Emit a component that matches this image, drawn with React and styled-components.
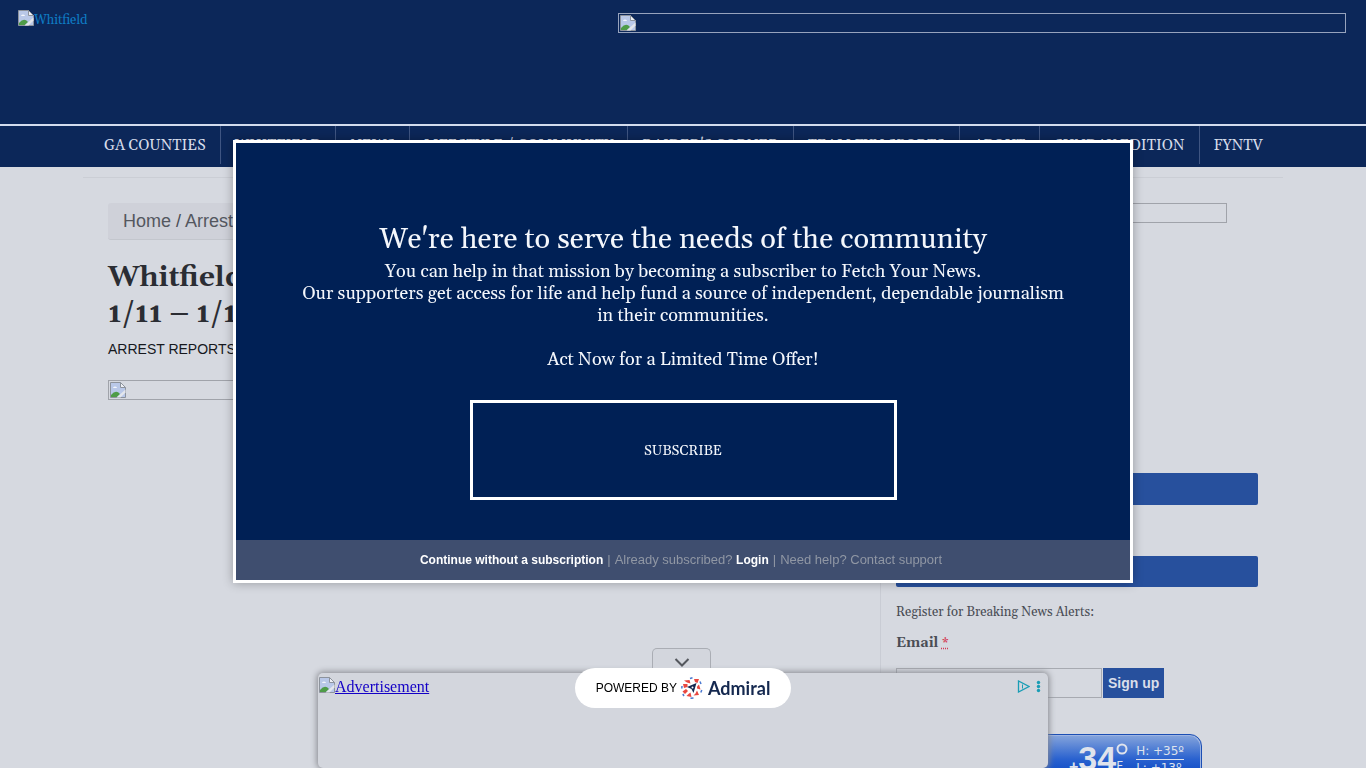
import React from "react";
import styled, { createGlobalStyle } from "styled-components";

const serif = `Georgia, Gelasio, "Liberation Serif", serif`;
const sans = `"Liberation Sans", Arial, sans-serif`;

const GlobalStyle = createGlobalStyle`
  *, *::before, *::after { box-sizing: border-box; }
  body {
    margin: 0;
    height: 100vh;
    overflow: hidden;
    background: #d6d9e0;
    color: #4a4d55;
    font: 13px/20px ${serif};
  }
  h1, h2, p, ul { margin: 0; padding: 0; }
  ul { list-style: none; }
`;

const Header = styled.header`
  display: flex;
  justify-content: space-between;
  align-items: flex-start;
  height: 124px;
  padding: 10px 20px 0 18px;
  background: #0c2759;
`;

const LogoLink = styled.a`
  display: flex;
  color: #0f7cc4;
  text-decoration: none;
`;

const ImageFrame = styled.div`
  display: flex;
  align-items: center;
  width: ${(p) => p.$width};
  height: 20px;
  margin: ${(p) => p.$margin || "0"};
  padding: 1px;
  border: 1px solid ${(p) => p.$line || "#a0a3aa"};
`;

const NavBar = styled.nav`
  height: 43px;
  border-top: 2px solid #d3dcee;
  background: #0c2759;
`;

const NavList = styled.ul`
  display: flex;
  width: 1200px;
  max-width: 100%;
  margin: 0 auto;
  padding-left: 7px;
`;

const NavItem = styled.li`
  height: 38px;
  padding: 0 14px;
  border-right: 1px solid #3f5582;
  &:last-child { border-right: 0; }
`;

const NavLink = styled.a`
  color: #d6dcea;
  font-size: 15px;
  line-height: 40px;
  text-decoration: none;
  white-space: nowrap;
`;

const Container = styled.div`
  width: 1200px;
  max-width: 100%;
  margin: 10px auto 0;
  padding: 0 25px;
  border-top: 1px solid #cbced5;
  display: flex;
`;

const Main = styled.main`
  flex: 1;
  padding: 25px 15px 0 0;
`;

const Breadcrumb = styled.div`
  height: 37px;
  padding: 0 15px;
  border-bottom: 1px solid #c3c6cd;
  border-radius: 3px;
  background: #cfd1d9;
  font: 18px/36px ${sans};
  a { color: #54575f; text-decoration: none; }
`;

const Title = styled.h1`
  margin-top: 20px;
  color: #2b2d33;
  font-size: 28px;
  line-height: 36px;
`;

const Category = styled.p`
  margin: 7px 0 21px;
  color: #16181d;
  font: 14px/20px ${sans};
`;

const Sidebar = styled.aside`
  width: 378px;
  min-height: 600px;
  padding: 25px 0 0 15px;
  border-left: 1px solid #c9ccd4;
`;

const Bar = styled.div`
  height: ${(p) => p.$height};
  margin-top: ${(p) => p.$top};
  border-radius: 2px;
  background: #27509d;
`;

const Notice = styled.p`
  margin-top: 15px;
`;

const EmailLabel = styled.label`
  display: block;
  margin: 11px 0 15px;
  font-size: 14px;
  font-weight: bold;
  abbr {
    color: #d33a55;
    font-weight: normal;
    text-decoration: underline dotted #d33a55;
  }
`;

const SignupRow = styled.div`
  display: flex;
  gap: 1px;
`;

const EmailInput = styled.input`
  width: 206px;
  height: 30px;
  border: 1px solid #a7aab1;
  background: transparent;
`;

const SignupButton = styled.button`
  height: 30px;
  padding: 0 5px;
  border: 0;
  background: #27509d;
  color: #d9deea;
  font: bold 14px/20px ${sans};
`;

const Weather = styled.div`
  display: flex;
  justify-content: flex-end;
  width: 250px;
  height: 110px;
  margin: 36px auto 0;
  padding: 8px 17px;
  border: 1px solid #1c4fb4;
  border-radius: 12px;
  box-shadow: inset -1px 1px 0 #9db4e2;
  background: linear-gradient(#86a5dc 0, #2a62cf 24px, #1450c8 36px);
  color: #dfe3ec;
`;

const Temperature = styled.div`
  display: flex;
  font: bold 34px/30px ${sans};
  small { margin-top: 9px; font-size: 16px; line-height: 30px; }
`;

const Degree = styled.div`
  display: flex;
  flex-direction: column;
  width: 12px;
  margin-right: 8px;
  font: 12px/14px "DejaVu Sans", sans-serif;
  svg { margin-bottom: 4px; }
`;

const HighLow = styled.div`
  font: 12px/16px "DejaVu Sans", sans-serif;
  p:first-child { border-bottom: 1px solid #dfe3ec; }
`;

const AdAnchor = styled.section`
  position: fixed;
  bottom: 0;
  left: 50%;
  width: 730px;
  height: 95px;
  transform: translateX(-50%);
  display: flex;
  justify-content: space-between;
  padding: 4px 6px 0 1px;
  border-radius: 5px;
  background: #d3d6dd;
  box-shadow: 0 0 6px 1px #85878d;
`;

const AdLink = styled.a`
  display: flex;
  height: 20px;
  color: #1300c6;
  font: 16px/20px "Liberation Serif", serif;
`;

const AdToggle = styled.button`
  position: absolute;
  left: 334px;
  top: -25px;
  width: 59px;
  height: 25px;
  display: grid;
  place-items: center;
  padding: 4px 0 0;
  border: 1px solid #aaadb4;
  border-bottom: 0;
  border-radius: 5px 5px 0 0;
  background: #d3d6dd;
`;

const AdChoices = styled.div`
  display: flex;
  gap: 4px;
  padding-top: 3px;
`;

const Overlay = styled.div`
  position: fixed;
  inset: 0;
  display: flex;
  flex-direction: column;
  align-items: center;
  gap: 85px;
  padding-top: 140px;
`;

const Dialog = styled.section`
  display: flex;
  flex-direction: column;
  width: 900px;
  max-width: 100%;
  border: 3px solid #fff;
  background: #002055;
  box-shadow: 0 0 10px rgba(0, 0, 0, 0.3);
  color: #f4f7fc;
  text-align: center;
`;

const DialogBody = styled.div`
  display: flex;
  flex-direction: column;
  align-items: center;
  padding: 76px 64px 40px;
`;

const DialogTitle = styled.h2`
  font-size: 29px;
  font-weight: normal;
  line-height: 42px;
`;

const DialogText = styled.p`
  font-size: 18px;
  line-height: 22px;
  & + & { margin-top: 22px; }
`;

const SubscribeButton = styled.button`
  width: 427px;
  height: 100px;
  margin-top: 29px;
  padding: 2px 0 0;
  border: 3px solid #fff;
  background: transparent;
  color: inherit;
  font: 14px/20px ${serif};
`;

const DialogFooter = styled.footer`
  display: flex;
  justify-content: center;
  align-items: center;
  height: 40px;
  padding-right: 4px;
  background: #3f4e6f;
  color: #9097a4;
  font: 13px/20px ${sans};
`;

const FooterLink = styled.a`
  color: ${(p) => (p.$strong ? "#fff" : "inherit")};
  font-weight: ${(p) => (p.$strong ? "bold" : "normal")};
  font-size: ${(p) => (p.$strong ? "12px" : "13px")};
  text-decoration: none;
`;

const Divider = styled.span`
  padding: 0 4px;
`;

const Powered = styled.a`
  display: flex;
  align-items: center;
  justify-content: center;
  width: 216px;
  height: 40px;
  border-radius: 20px;
  background: #fff;
  color: #000;
  font: 12px/20px ${sans};
  text-decoration: none;
  svg { margin: 0 5px 0 4px; }
`;

const Brand = styled.span`
  color: #14284f;
  font: bold 18px/20px Lato, sans-serif;
`;

const BrokenImage = () => (
  <svg width="16" height="16" viewBox="0 0 16 16" aria-hidden="true">
    <path d="M.5.5h10l5 5v10H.5z" fill="#b9c8e8" stroke="#8d939c" />
    <path d="M10.500.5v5h5z" fill="#eef0f5" stroke="#8d939c" />
    <path d="M3 6a2 1.500 0 0 1 4 0z" fill="#f2f5fb" />
    <path d="M1 15v-2q5-6 9-1l-3 3z" fill="#4f9c48" />
    <path d="m6.500 15.500 9-8v3l-5 5z" fill="#e3e6ec" />
  </svg>
);

const AdmiralMark = () => (
  <svg width="22" height="22" viewBox="0 0 22 22" aria-hidden="true">
    <g fill="#e8473f">
      <path d="M3 3.500 8.500 3l1 3.500-3.500-1z" />
      <path d="m13 2 5 0 -1.500 4-2.500-1z" />
      <path d="m18 7.500 1.500 5-3.500-1 0-2z" />
      <path d="m16 13.500 2 4.500-5.500.5 2-2z" />
      <path d="m9.500 15.500 1 4.500-5-1 2-2z" />
      <path d="M1.500 14.500 5 12l2 2-3 3z" />
      <path d="m2 7 4.500 0 0 3-3.500 1z" />
    </g>
    <path
      d="M9 1.500 11.500.8M19 4.500l1 2.500M20.800 13l-1 2.500M12.500 21l-3 .3M3 19l-1.200-2M.8 11.500l.2-2.500"
      fill="none"
      stroke="#4a78d0"
      strokeWidth="1.500"
    />
    <path d="m15.500 6-3 10-2-4-4.500-2z" fill="#14284f" />
    <circle cx="11.500" cy="10.500" r="1" fill="#fff" />
  </svg>
);

const navItems = [
  "GA COUNTIES",
  "WHITFIELD",
  "NEWS",
  "LIFESTYLE / COMMUNITY",
  "RAIDER'S CORNER",
  "TEAM FYN SPORTS",
  "ABOUT",
  "SUNDAY EDITION",
  "FYNTV",
];

export default function App() {
  return (
    <>
      <GlobalStyle />
      <Header>
        <LogoLink href="#home">
          <BrokenImage />
          Whitfield
        </LogoLink>
        <ImageFrame $width="728px" $margin="3px 0 0" $line="#97a3bd">
          <BrokenImage />
        </ImageFrame>
      </Header>
      <NavBar>
        <NavList>
          {navItems.map((label) => (
            <NavItem key={label}>
              <NavLink href="#nav">{label}</NavLink>
            </NavItem>
          ))}
        </NavList>
      </NavBar>
      <Container>
        <Main>
          <Breadcrumb>
            <a href="#home">Home</a> / <a href="#arrests">Arrest Reports</a>
          </Breadcrumb>
          <Title>
            Whitfield County Arrest Reports
            <br />
            1/11 – 1/17
          </Title>
          <Category>ARREST REPORTS</Category>
          <ImageFrame $width="100%">
            <BrokenImage />
          </ImageFrame>
        </Main>
        <Sidebar>
          <ImageFrame $width="300px" $margin="0 auto">
            <BrokenImage />
          </ImageFrame>
          <Bar $height="32px" $top="250px" />
          <Bar $height="31px" $top="51px" />
          <Notice>Register for Breaking News Alerts:</Notice>
          <EmailLabel htmlFor="email">
            Email <abbr title="required">*</abbr>
          </EmailLabel>
          <SignupRow>
            <EmailInput id="email" type="email" />
            <SignupButton type="button">Sign up</SignupButton>
          </SignupRow>
          <Weather>
            <Temperature>
              <small>+</small>34
            </Temperature>
            <Degree>
              <svg width="12" height="12" viewBox="0 0 12 12" aria-hidden="true">
                <circle cx="6" cy="6" r="4.500" fill="none" stroke="#dfe3ec" strokeWidth="2" />
              </svg>
              F
            </Degree>
            <HighLow>
              <p>H: +35º</p>
              <p>L: +13º</p>
            </HighLow>
          </Weather>
        </Sidebar>
      </Container>
      <AdAnchor>
        <AdToggle type="button" aria-label="Collapse">
          <svg width="16" height="10" viewBox="0 0 16 10" aria-hidden="true">
            <path d="m1.500 1 6.500 6.500L14.500 1" fill="none" stroke="#54575d" strokeWidth="2" />
          </svg>
        </AdToggle>
        <AdLink href="#ad">
          <BrokenImage />
          Advertisement
        </AdLink>
        <AdChoices>
          <svg width="13" height="13" viewBox="0 0 13 13" aria-hidden="true">
            <path d="M1.500 1v11L12 6.500z" fill="none" stroke="#199db5" strokeWidth="1.300" />
            <path d="M5.500 4.500v4" fill="none" stroke="#199db5" />
          </svg>
          <svg width="8" height="13" viewBox="0 0 8 13" fill="#199db5" aria-hidden="true">
            <circle cx="4.500" cy="2.500" r="1.700" />
            <circle cx="4.500" cy="6.500" r="1.700" />
            <circle cx="4.500" cy="10.500" r="1.700" />
          </svg>
        </AdChoices>
      </AdAnchor>
      <Overlay>
        <Dialog role="dialog" aria-labelledby="offer-title">
          <DialogBody>
            <DialogTitle id="offer-title">We're here to serve the needs of the community</DialogTitle>
            <DialogText>
              You can help in that mission by becoming a subscriber to Fetch Your News.
              <br />
              Our supporters get access for life and help fund a source of independent, dependable journalism in their
              communities.
            </DialogText>
            <DialogText>Act Now for a Limited Time Offer!</DialogText>
            <SubscribeButton type="button">SUBSCRIBE</SubscribeButton>
          </DialogBody>
          <DialogFooter>
            <FooterLink $strong href="#continue">Continue without a subscription</FooterLink>
            <Divider>|</Divider>
            <span>Already subscribed?&nbsp;</span>
            <FooterLink $strong href="#login">Login</FooterLink>
            <Divider>|</Divider>
            <span>Need help?&nbsp;</span>
            <FooterLink href="#support">Contact support</FooterLink>
          </DialogFooter>
        </Dialog>
        <Powered href="#admiral">
          POWERED BY
          <AdmiralMark />
          <Brand>Admiral</Brand>
        </Powered>
      </Overlay>
    </>
  );
}
